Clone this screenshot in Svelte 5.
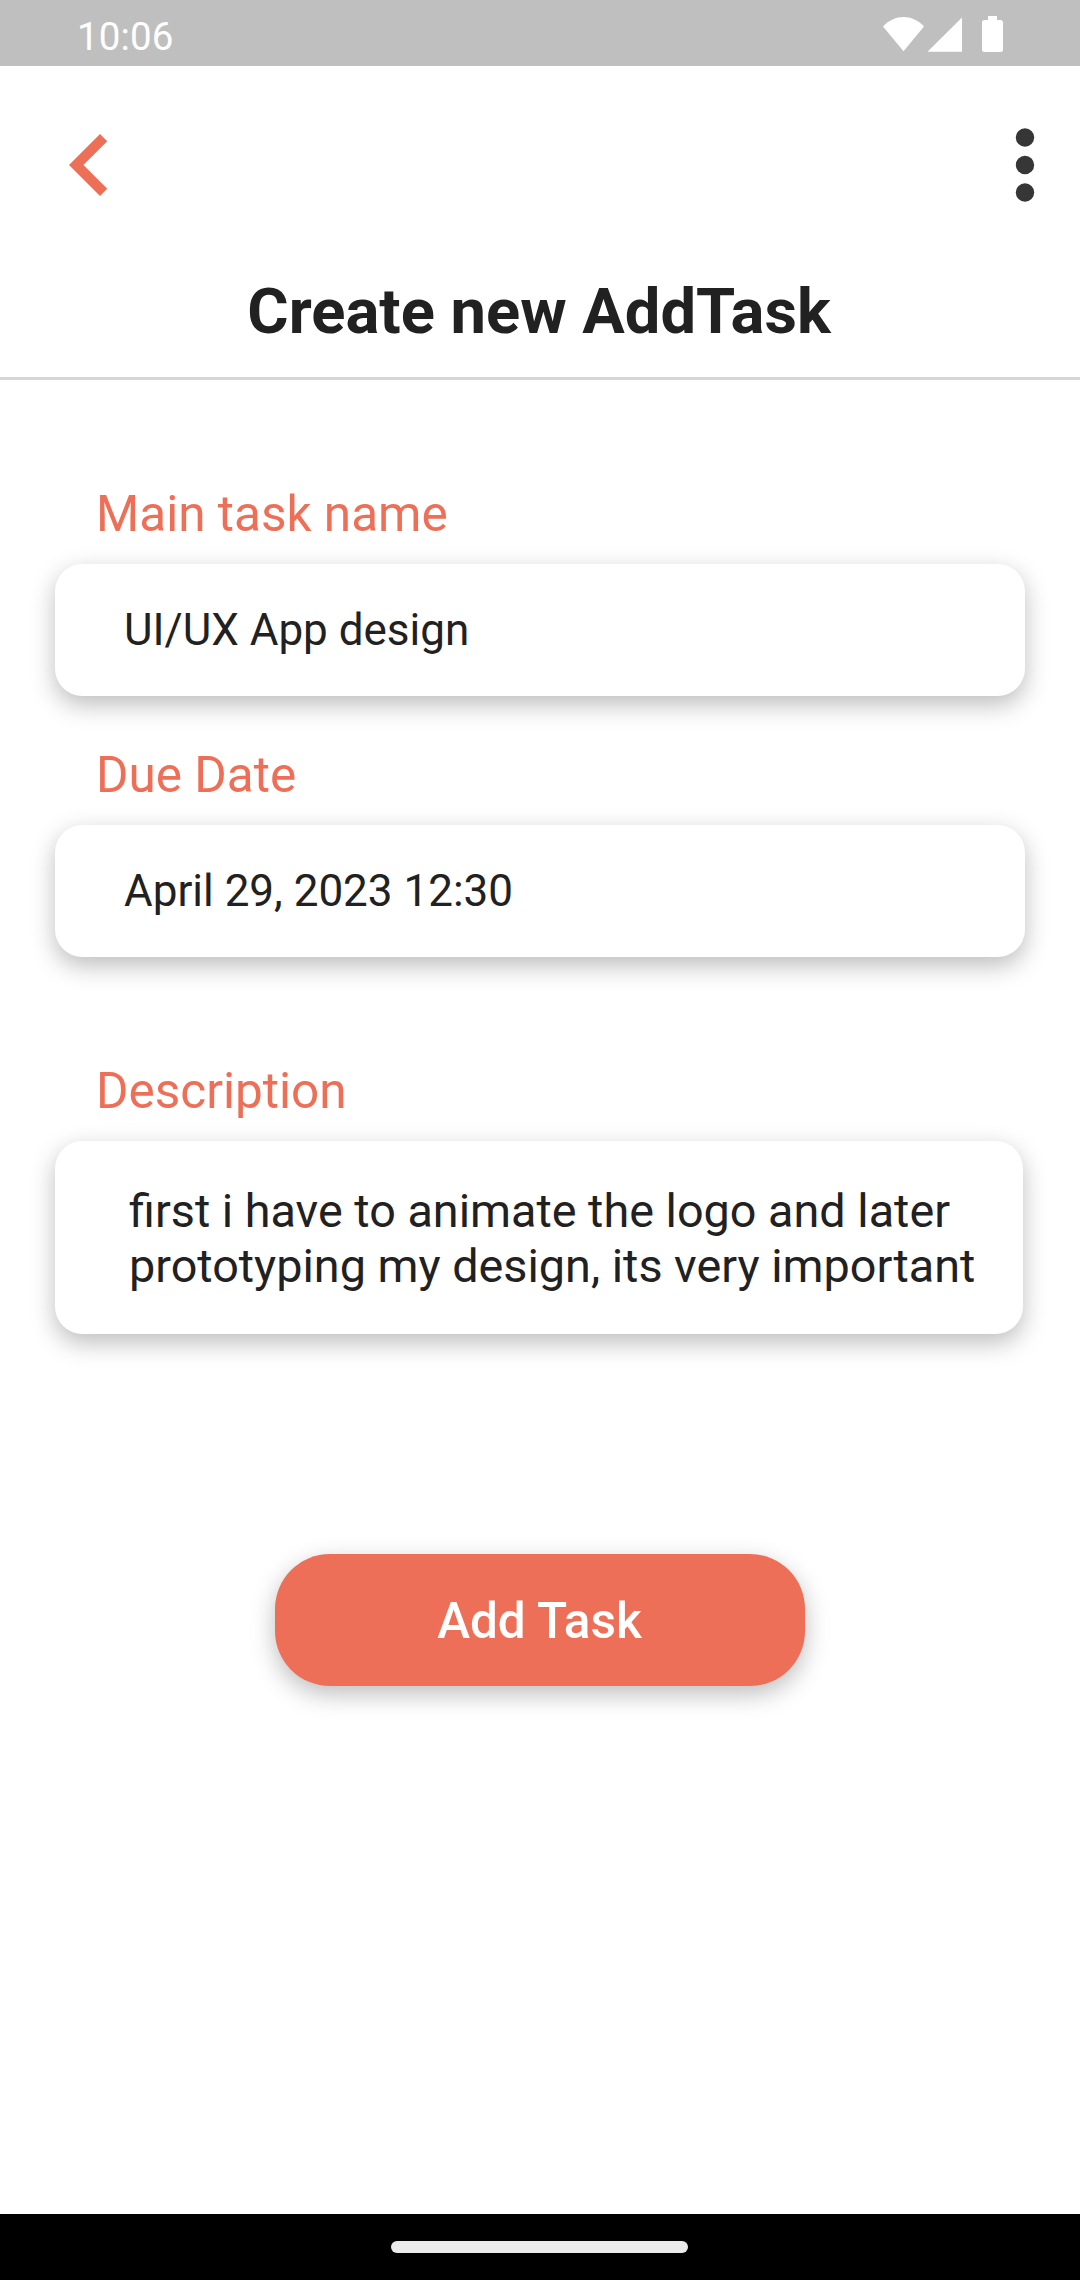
<script>
  const fields = [
    { label: 'Main task name', value: 'UI/UX App design' },
    { label: 'Due Date', value: 'April 29, 2023 12:30' },
  ];
  const descriptionLines = [
    'first i have to animate the logo and later',
    'prototyping my design, its very important',
  ];
</script>

<div class="screen">
  <div class="status">
    <span class="time">10:06</span>
    <svg class="indicators" viewBox="0 0 120 36" aria-hidden="true">
      <path d="M20.5 35.3 0 10.5C11.8-2.2 29.2-2.2 41 10.5Z" />
      <path d="M44.5 35.7 79 1.5V35.7Z" />
      <path d="M105 0h9v4h3.5a2.5 2.5 0 0 1 2.5 2.5v27a2.5 2.5 0 0 1-2.5 2.5h-16a2.5 2.5 0 0 1-2.5-2.5v-27a2.5 2.5 0 0 1 2.5-2.5h3.5Z" />
    </svg>
  </div>

  <header>
    <div class="toolbar">
      <button class="icon" aria-label="Back">
        <svg width="38" height="62" viewBox="0 0 38 62">
          <path class="back" d="M0 31 31 0l7.2 7.2L14.4 31l23.8 23.8L31 62Z" />
        </svg>
      </button>
      <button class="icon" aria-label="More options">
        <svg width="20" height="76" viewBox="0 0 20 76">
          <g class="dots">
            <circle cx="10" cy="10.5" r="9.2" />
            <circle cx="10" cy="38" r="9.2" />
            <circle cx="10" cy="65.5" r="9.2" />
          </g>
        </svg>
      </button>
    </div>
    <h1>Create new AddTask</h1>
  </header>

  <main>
    {#each fields as field}
      <section>
        <h2>{field.label}</h2>
        <div class="field">{field.value}</div>
      </section>
    {/each}
    <section class="description">
      <h2>Description</h2>
      <div class="area">
        {#each descriptionLines as line}
          <div>{line}</div>
        {/each}
      </div>
    </section>
    <button class="submit">Add Task</button>
  </main>

  <footer><div class="pill"></div></footer>
</div>

<style>
  :global(body) {
    margin: 0;
  }
  .screen {
    display: flex;
    flex-direction: column;
    width: 1080px;
    height: 2280px;
    background: #fff;
    color: #212121;
    font-family: Roboto, sans-serif;
    overflow: hidden;
  }
  .status {
    box-sizing: border-box;
    display: flex;
    justify-content: space-between;
    align-items: flex-start;
    height: 66px;
    padding: 16px 77px 0 77px;
    background: #bfbfbf;
    color: #fff;
  }
  .time {
    margin-top: 1px;
    font-size: 38.5px;
    line-height: 40px;
    letter-spacing: 0.1px;
  }
  .indicators {
    width: 120px;
    height: 36px;
    fill: #fff;
  }
  header {
    box-sizing: border-box;
    height: 313.5px;
    padding-top: 61px;
    border-bottom: 3px solid #d6d6d6;
  }
  .toolbar {
    display: flex;
    justify-content: space-between;
    align-items: center;
    height: 76px;
    padding: 0 45px 0 69px;
  }
  button {
    border: 0;
    padding: 0;
    background: none;
    font-family: inherit;
  }
  .icon {
    display: flex;
  }
  .icon svg {
    display: block;
    overflow: visible;
  }
  .back {
    fill: #ee6f57;
  }
  .dots {
    fill: #363636;
  }
  h1 {
    margin: 71px 2px 0 0;
    font-size: 63.25px;
    line-height: 74px;
    font-weight: 700;
    text-align: center;
  }
  main {
    flex: 1;
    display: flex;
    flex-direction: column;
    padding: 105.5px 55px 0;
  }
  section {
    margin-bottom: 50px;
  }
  h2 {
    margin: 0 0 21px 41px;
    color: #ee6f57;
    font-size: 49.5px;
    line-height: 58px;
    font-weight: 400;
  }
  .field,
  .area {
    box-sizing: border-box;
    border-radius: 27.5px;
    background: #fff;
    box-shadow: 0 8.25px 24px rgba(0, 0, 0, 0.26);
  }
  .field {
    height: 132px;
    padding-left: 69px;
    font-size: 44px;
    line-height: 132px;
  }
  .description {
    margin: 55px 0 0;
  }
  .area {
    width: 968px;
    height: 192.5px;
    padding: 43px 0 0 74px;
    font-size: 46.75px;
    line-height: 55px;
    white-space: nowrap;
  }
  .submit {
    align-self: center;
    width: 530px;
    height: 132px;
    margin-top: 220px;
    padding: 1px 1px 0 0;
    border-radius: 55px;
    background: #ee6f57;
    box-shadow: 0 8.25px 24px rgba(0, 0, 0, 0.26);
    color: #fff;
    font-size: 49.5px;
    line-height: 132px;
    font-weight: 500;
  }
  footer {
    display: flex;
    justify-content: center;
    height: 66px;
    background: #000;
  }
  .pill {
    width: 297px;
    height: 11.5px;
    margin: 27px 1px 0 0;
    border-radius: 6px;
    background: #ebebeb;
  }
</style>
